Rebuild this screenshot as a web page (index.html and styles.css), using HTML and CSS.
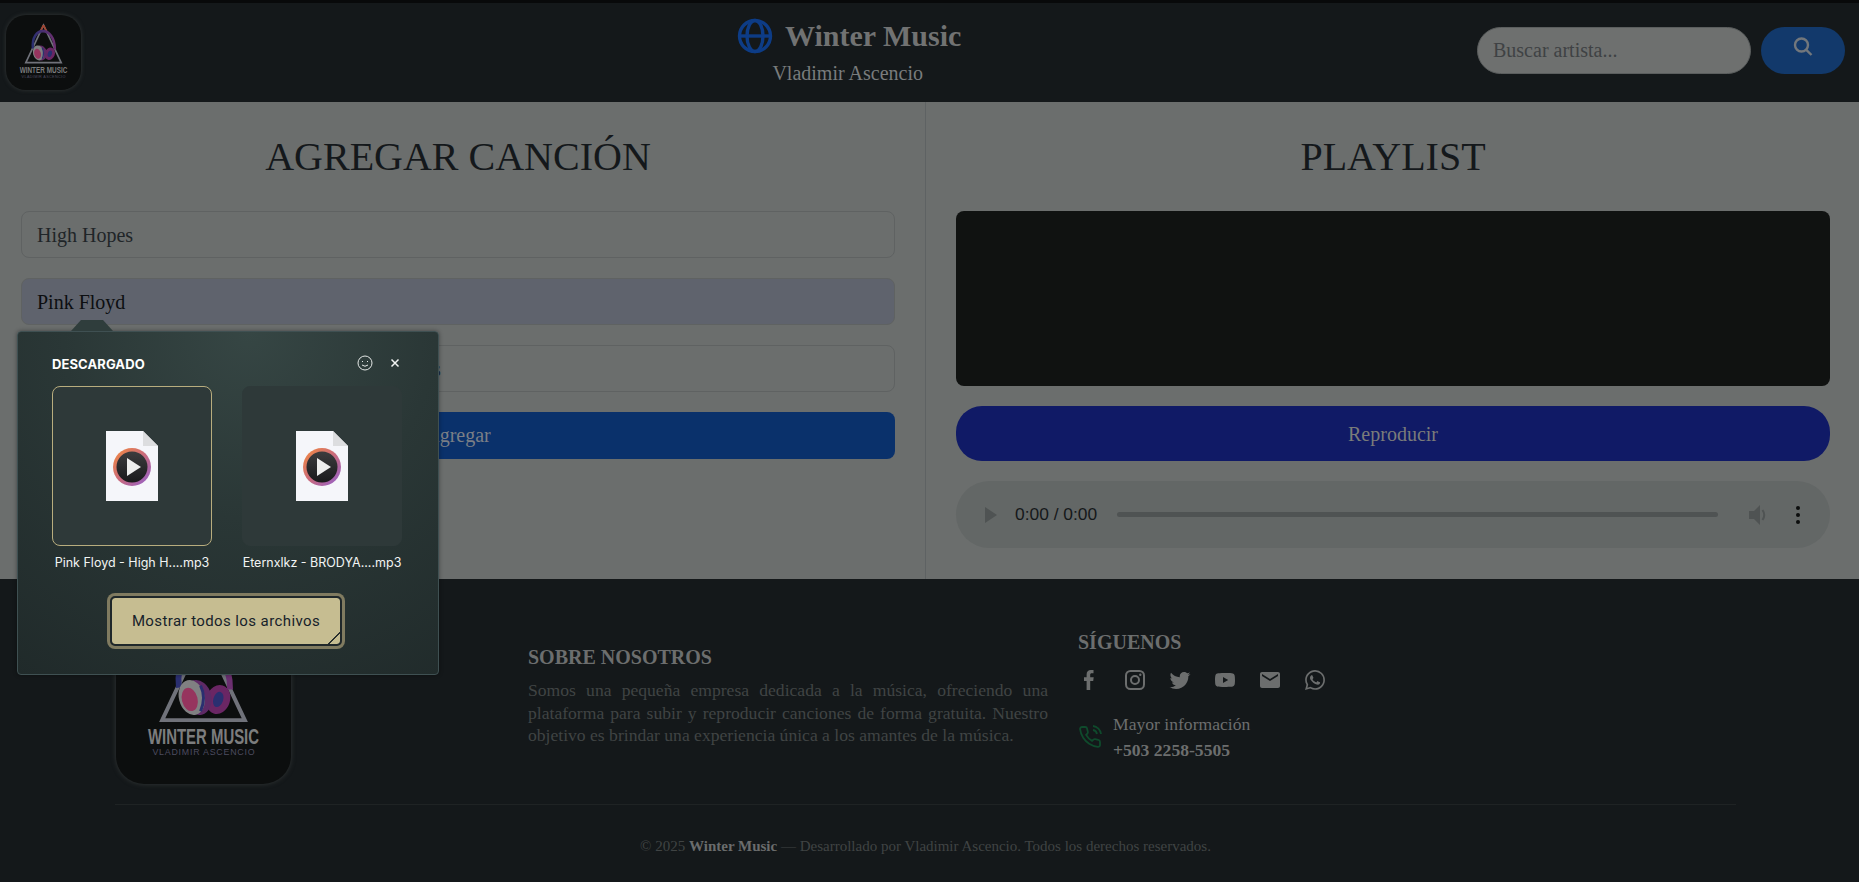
FILE: index.html
```html
<!DOCTYPE html>
<html lang="es">
<head>
  <meta charset="UTF-8">
  <title>Winter Music</title>
  <link rel="stylesheet" href="styles.css">
</head>
<body>

<svg class="defs" width="0" height="0">
  <defs>
    <linearGradient id="bandGrad" x1="0" y1="0" x2="1" y2="0">
      <stop offset="0" stop-color="#2a2f70"/>
      <stop offset="1" stop-color="#6c2f70"/>
    </linearGradient>
    <linearGradient id="ringGrad" x1="0" y1="0" x2="1" y2="1">
      <stop offset="0" stop-color="#f58a3c"/>
      <stop offset="0.5" stop-color="#c96a7c"/>
      <stop offset="1" stop-color="#8f5fd0"/>
    </linearGradient>
    <linearGradient id="discGrad" x1="0" y1="0" x2="0" y2="1">
      <stop offset="0" stop-color="#3c3c3e"/>
      <stop offset="1" stop-color="#1a1a1c"/>
    </linearGradient>
    <symbol id="logoMark" viewBox="0 0 178 178">
      <path d="M89 24 L131 113 H47 Z" fill="none" stroke="#70727a" stroke-width="4"/>
      <path d="M89 24 L81 40 M89 24 L97 40" stroke="#a34632" stroke-width="4" fill="none"/>
      <path d="M64 80 C58 24 116 24 116 82" fill="none" stroke="url(#bandGrad)" stroke-width="6"/>
      <ellipse cx="104" cy="92" rx="12" ry="15" fill="#6a2664" transform="rotate(18 104 92)"/>
      <ellipse cx="104" cy="92" rx="5" ry="8" fill="#2a2f70" transform="rotate(18 104 92)"/>
      <ellipse cx="83" cy="90" rx="14" ry="18" fill="#5e2a66" transform="rotate(-14 83 90)"/>
      <ellipse cx="77" cy="90" rx="13" ry="18" fill="#808082" transform="rotate(-14 77 90)"/>
      <ellipse cx="75" cy="92" rx="8" ry="12" fill="#96345e" transform="rotate(-14 75 92)"/>
      <path d="M86 78 Q92 90 86 104" fill="none" stroke="#2a2f70" stroke-width="3"/>
      <text class="logo-name" x="89" y="137" text-anchor="middle" textLength="113" lengthAdjust="spacingAndGlyphs">WINTER MUSIC</text>
      <text class="logo-sub" x="89" y="149" text-anchor="middle" textLength="104">VLADIMIR ASCENCIO</text>
    </symbol>
    <symbol id="fileIcon" viewBox="0 0 52 70">
      <path d="M0 0 H37 L52 15 V70 H0 Z" fill="#f5f6fa"/>
      <path d="M37 0 L52 15 H37 Z" fill="#dcdddf"/>
      <circle cx="26" cy="36" r="19" fill="url(#ringGrad)"/>
      <circle cx="26" cy="36" r="15.500" fill="url(#discGrad)"/>
      <path d="M21 27 L35 36 L21 45 Z" fill="#eeeeee"/>
    </symbol>
  </defs>
</svg>

<header class="top-bar">
  <div class="logo logo-small">
    <svg width="75" height="75"><use href="#logoMark"/></svg>
  </div>
  <div class="brand">
    <h1 class="brand-title">
      <svg width="36" height="36" viewBox="0 0 36 36" fill="none" stroke="#0d3c86" stroke-width="3.400">
        <circle cx="18" cy="18" r="15.500"/>
        <ellipse cx="18" cy="18" rx="8" ry="15.500"/>
        <path d="M3 18 H33"/>
      </svg>
      Winter Music
    </h1>
    <p class="brand-sub">Vladimir Ascencio</p>
  </div>
  <form class="search">
    <input class="search-input" type="text" placeholder="Buscar artista...">
    <button class="search-btn" type="button">
      <svg width="20" height="20" viewBox="0 0 20 20" fill="none" stroke="#72777c" stroke-width="2.400">
        <circle cx="8.500" cy="8" r="6.500"/>
        <path d="M13.300 12.800 L18.500 18"/>
      </svg>
    </button>
  </form>
</header>

<main class="columns">
  <section class="col col-left">
    <h2>AGREGAR CANCIÓN</h2>
    <input class="field" type="text" value="High Hopes">
    <input class="field field-filled" type="text" value="Pink Floyd">
    <div class="field field-file">s</div>
    <button class="add-btn" type="button">Agregar</button>
  </section>

  <section class="col col-right">
    <h2>PLAYLIST</h2>
    <div class="video"></div>
    <button class="play-btn" type="button">Reproducir</button>
    <div class="audio">
      <span class="audio-play"></span>
      <span class="audio-time">0:00 / 0:00</span>
      <span class="audio-track"></span>
      <svg width="20" height="24" viewBox="0 0 20 24" fill="#4f5353">
        <path d="M1 8 H6 L12 2 V22 L6 16 H1 Z"/>
        <path d="M14.500 7 Q18 12 14.500 17" fill="none" stroke="#4f5353" stroke-width="2"/>
      </svg>
      <span class="audio-more"><i></i><i></i><i></i></span>
    </div>
  </section>
</main>

<footer class="footer">
  <div class="footer-top">
    <div class="logo logo-big">
      <svg width="175" height="175"><use href="#logoMark"/></svg>
    </div>
    <div class="about">
      <h3>SOBRE NOSOTROS</h3>
      <p>Somos una pequeña empresa dedicada a la música, ofreciendo una plataforma para subir y reproducir canciones de forma gratuita. Nuestro objetivo es brindar una experiencia única a los amantes de la música.</p>
    </div>
    <div class="social">
      <h3>SÍGUENOS</h3>
      <div class="social-icons">
        <svg viewBox="0 0 24 24"><path d="M15.500 2h-2.700C10.200 2 8.600 3.700 8.600 6.400v2.900H6v3.600h2.600V22h3.600v-9.100h3l.5-3.600h-3.500V6.800c0-1 .4-1.600 1.600-1.600h1.700V2z"/></svg>
        <svg viewBox="0 0 24 24"><path fill-rule="evenodd" d="M7.500 2h9A5.500 5.500 0 0 1 22 7.500v9a5.500 5.500 0 0 1-5.500 5.500h-9A5.500 5.500 0 0 1 2 16.500v-9A5.500 5.500 0 0 1 7.500 2zm0 2A3.500 3.500 0 0 0 4 7.500v9A3.500 3.500 0 0 0 7.500 20h9a3.500 3.500 0 0 0 3.500-3.500v-9A3.500 3.500 0 0 0 16.500 4h-9zM12 7a5 5 0 1 1 0 10 5 5 0 0 1 0-10zm0 2a3 3 0 1 0 0 6 3 3 0 0 0 0-6zm5.300-3.500a1.200 1.200 0 1 1 0 2.400 1.200 1.200 0 0 1 0-2.400z"/></svg>
        <svg viewBox="0 0 24 24"><path d="M22.460 6c-.77.35-1.600.58-2.460.69.880-.53 1.560-1.370 1.880-2.380-.83.5-1.750.85-2.720 1.050C18.370 4.500 17.260 4 16 4c-2.350 0-4.270 1.920-4.270 4.290 0 .34.04.67.11.98C8.280 9.090 5.110 7.380 3 4.790c-.37.63-.58 1.370-.58 2.150 0 1.490.75 2.810 1.910 3.560-.71 0-1.370-.2-1.950-.5v.03c0 2.080 1.480 3.820 3.440 4.210a4.220 4.220 0 0 1-1.930.07 4.280 4.280 0 0 0 4 2.980 8.521 8.521 0 0 1-5.330 1.840c-.34 0-.68-.02-1.020-.06C3.440 20.290 5.700 21 8.120 21 16 21 20.330 14.460 20.330 8.790c0-.19 0-.37-.01-.56.84-.6 1.560-1.360 2.140-2.230z"/></svg>
        <svg viewBox="0 0 24 24"><path d="M10 15l5.190-3L10 9v6m11.560-7.830c.13.47.22 1.100.28 1.900.07.8.1 1.490.1 2.090L22 12c0 2.190-.16 3.800-.44 4.830-.25.9-.83 1.480-1.730 1.730-.47.13-1.330.22-2.650.28-1.300.07-2.490.1-3.590.1L12 19c-4.190 0-6.800-.16-7.830-.44-.9-.25-1.480-.83-1.730-1.730-.13-.47-.22-1.100-.28-1.900-.07-.8-.1-1.490-.1-2.090L2 12c0-2.190.16-3.800.44-4.830.25-.9.83-1.480 1.730-1.730.47-.13 1.330-.22 2.650-.28 1.300-.07 2.490-.1 3.590-.1L12 5c4.190 0 6.800.16 7.830.44.9.25 1.480.83 1.730 1.730z"/></svg>
        <svg viewBox="0 0 24 24"><path d="M20 4H4c-1.100 0-1.990.9-1.990 2L2 18c0 1.100.9 2 2 2h16c1.100 0 2-.9 2-2V6c0-1.100-.9-2-2-2zm0 4l-8 5-8-5V6l8 5 8-5v2z"/></svg>
        <svg viewBox="0 0 24 24"><path d="M12.040 2c-5.460 0-9.910 4.450-9.910 9.910 0 1.750.46 3.450 1.320 4.950L2.050 22l5.250-1.380c1.450.79 3.080 1.210 4.740 1.210 5.460 0 9.910-4.450 9.910-9.910 0-2.650-1.030-5.140-2.900-7.010A9.816 9.816 0 0 0 12.040 2m.01 1.670c2.200 0 4.260.86 5.820 2.420a8.225 8.225 0 0 1 2.410 5.830c0 4.540-3.700 8.230-8.240 8.230-1.480 0-2.930-.39-4.190-1.150l-.3-.17-3.120.82.83-3.040-.2-.32a8.188 8.188 0 0 1-1.260-4.380c.01-4.540 3.700-8.240 8.250-8.240M8.530 7.330c-.16 0-.43.06-.66.31-.22.25-.87.86-.87 2.070 0 1.220.89 2.390 1 2.560.14.17 1.760 2.670 4.250 3.730.59.27 1.050.42 1.410.53.59.19 1.130.16 1.560.1.48-.07 1.460-.6 1.670-1.180.21-.58.21-1.070.15-1.180-.07-.1-.23-.16-.48-.27-.25-.14-1.470-.74-1.690-.82-.23-.08-.37-.12-.56.12-.16.25-.64.81-.78.97-.15.17-.29.19-.53.07-.26-.13-1.060-.39-2-1.230-.74-.66-1.230-1.470-1.380-1.720-.12-.24-.01-.39.11-.5.11-.11.27-.29.37-.44.13-.14.17-.25.25-.41.08-.17.04-.31-.02-.43-.06-.11-.56-1.350-.77-1.840-.2-.48-.4-.42-.56-.43-.14 0-.3-.01-.47-.01z"/></svg>
      </div>
      <div class="contact">
        <svg width="24" height="24" viewBox="0 0 24 24" fill="none" stroke="#0f4a2c" stroke-width="1.800">
          <path d="M22 16.900v3a2 2 0 0 1-2.200 2 19.800 19.800 0 0 1-8.600-3.100 19.500 19.500 0 0 1-6-6A19.800 19.800 0 0 1 2.100 4.200 2 2 0 0 1 4.100 2h3a2 2 0 0 1 2 1.700c.1 1 .4 1.900.7 2.800a2 2 0 0 1-.5 2.100L8.100 9.900a16 16 0 0 0 6 6l1.300-1.300a2 2 0 0 1 2.100-.4c.9.3 1.800.6 2.800.7a2 2 0 0 1 1.700 2z"/>
          <path d="M15 5a5 5 0 0 1 4 4M15 1a9 9 0 0 1 8 8"/>
        </svg>
        <p>Mayor información<br><strong>+503 2258-5505</strong></p>
      </div>
    </div>
  </div>
  <p class="copyright">© 2025 <strong>Winter Music</strong> — Desarrollado por Vladimir Ascencio. Todos los derechos reservados.</p>
</footer>

<aside class="downloads">
  <div class="downloads-head">
    <span class="downloads-title">DESCARGADO</span>
    <svg class="smile-icon" width="16" height="16" viewBox="0 0 16 16" fill="none" stroke="#e4e8e6" stroke-width="1">
      <circle cx="8" cy="8" r="7"/>
      <path d="M5 10 Q8 12.500 11 10"/>
      <path d="M5.500 6 V7 M10.500 6 V7"/>
    </svg>
    <svg class="close-icon" width="10" height="10" viewBox="0 0 10 10" stroke="#f2f4f3" stroke-width="1.500">
      <path d="M1.500 1.500 L8.500 8.500 M8.500 1.500 L1.500 8.500"/>
    </svg>
  </div>
  <div class="tiles">
    <div class="tile tile-active">
      <div class="tile-box">
        <svg width="52" height="70" viewBox="0 0 52 70"><use href="#fileIcon"/></svg>
      </div>
      <span class="tile-name">Pink Floyd - High H....mp3</span>
    </div>
    <div class="tile">
      <div class="tile-box">
        <svg width="52" height="70" viewBox="0 0 52 70"><use href="#fileIcon"/></svg>
      </div>
      <span class="tile-name">Eternxlkz - BRODYA....mp3</span>
    </div>
  </div>
  <div class="show-all-row">
    <button class="show-all" type="button">Mostrar todos los archivos</button>
  </div>
</aside>

</body>
</html>
```

FILE: styles.css
```css
* {
  box-sizing: border-box;
}

body {
  margin: 0;
  position: relative;
  font-family: "Liberation Serif", serif;
  background: #6b6e6d;
  color: #14181b;
}

.defs {
  position: absolute;
}

/* header */
.top-bar {
  display: flex;
  align-items: center;
  height: 102px;
  padding: 0 14px 0 6px;
  background: #14181a;
  border-top: 3px solid #08090a;
}

.logo {
  background: #0c0e0e;
  flex: none;
}

.logo svg {
  display: block;
}

.logo-small {
  width: 75px;
  height: 75px;
  border-radius: 20px;
  box-shadow: 0 0 4px #333737;
}

.logo-name {
  font-family: "Liberation Sans", sans-serif;
  font-weight: bold;
  font-size: 23px;
  fill: #7c7d7e;
}

.logo-sub {
  font-family: "Liberation Sans", sans-serif;
  font-size: 9px;
  fill: #4d4c60;
}

.brand {
  margin-left: 656px;
  padding-bottom: 2px;
  text-align: center;
}

.brand-title {
  display: flex;
  align-items: center;
  gap: 12px;
  margin: 0;
  font-size: 30px;
  color: #717272;
}

.brand-sub {
  margin: 8px 0 0;
  padding-right: 3px;
  font-size: 20px;
  color: #797c7d;
}

.search {
  display: flex;
  gap: 10px;
  margin: 0 0 4px auto;
}

.search-input {
  width: 274px;
  height: 47px;
  padding: 0 15px;
  font: 20px "Liberation Serif", serif;
  color: #3f4244;
  background: #6e706f;
  border: 1px solid #5b5e5e;
  border-radius: 24px;
  outline: none;
}

.search-input::placeholder {
  color: #3f4244;
  opacity: 1;
}

.search-btn {
  display: flex;
  justify-content: center;
  padding: 10px 0 0;
  width: 84px;
  height: 47px;
  background: #12396b;
  border: none;
  border-radius: 24px;
}

/* main columns */
.columns {
  display: grid;
  grid-template-columns: 926px 1fr;
  height: 477px;
}

.col {
  display: flex;
  flex-direction: column;
  gap: 20px;
}

.col-left {
  padding: 32px 30px 0 21px;
  border-right: 1px solid #5e6263;
}

.col-right {
  padding: 32px 29px 0 30px;
}

h2 {
  margin: 0 0 11px;
  font-size: 40px;
  font-weight: normal;
  line-height: 46px;
  text-align: center;
}

.field {
  width: 100%;
  height: 47px;
  padding: 2px 15px 0;
  font: 20px "Liberation Serif", serif;
  line-height: 43px;
  color: #1f2528;
  background: transparent;
  border: 1px solid #5f6262;
  border-radius: 8px;
  outline: none;
}

.field-filled {
  color: #0c0e10;
  background: #5f636d;
}

.field-file {
  padding-left: 411px;
  color: #1c2a40;
}

.add-btn {
  height: 47px;
  font: 20px "Liberation Serif", serif;
  color: #7a7f86;
  background: #0a316b;
  border: none;
  border-radius: 8px;
}

.video {
  height: 175px;
  background: #101211;
  border-radius: 8px;
}

.play-btn {
  height: 55px;
  padding-top: 2px;
  font: 20px "Liberation Serif", serif;
  color: #7a7c7a;
  background: #101a66;
  border: none;
  border-radius: 26px;
}

.audio {
  display: flex;
  align-items: center;
  height: 67px;
  padding: 0 30px 0 29px;
  background: #636766;
  border-radius: 34px;
}

.audio-play {
  width: 0;
  height: 0;
  border-left: 12px solid #4f5353;
  border-top: 8px solid transparent;
  border-bottom: 8px solid transparent;
}

.audio-time {
  margin: 0 20px 0 18px;
  font: 17.400px "Liberation Sans", sans-serif;
  color: #15181a;
}

.audio-track {
  flex: 1;
  height: 5px;
  margin-right: 30px;
  background: #4f5353;
  border-radius: 3px;
}

.audio-more {
  display: flex;
  flex-direction: column;
  gap: 3px;
  margin-left: 28px;
}

.audio-more i {
  width: 4px;
  height: 4px;
  background: #0c0e0e;
  border-radius: 50%;
}

/* footer */
.footer {
  height: 303px;
  padding: 30px 123px 0 115px;
  background: #14181a;
}

.footer-top {
  display: flex;
  align-items: center;
  padding-bottom: 20px;
  border-bottom: 1px solid #1f2324;
}

.logo-big {
  width: 175px;
  height: 175px;
  margin: 0 237px 0 1px;
  border-radius: 28px;
  box-shadow: 0 0 5px #333737;
}

.about {
  width: 520px;
  margin-right: 30px;
}

h3 {
  margin: 0;
  font-size: 20px;
  color: #6c6e6e;
}

.about p {
  margin: 10px 0 0;
  font-size: 17.600px;
  line-height: 22.400px;
  text-align: justify;
  color: #404444;
}

.social-icons {
  display: flex;
  gap: 21px;
  margin-top: 14px;
}

.social-icons svg {
  width: 24px;
  height: 24px;
  fill: #6c6e6e;
}

.contact {
  display: flex;
  align-items: center;
  gap: 11px;
  margin-top: 19px;
}

.contact p {
  margin: 0;
  font-size: 17.600px;
  line-height: 26px;
  color: #6c6e6e;
}

.copyright {
  margin: 33px 0 0;
  font-size: 15px;
  text-align: center;
  color: #404444;
}

.copyright strong {
  color: #6a6c6c;
}

/* download popup */
.downloads {
  position: absolute;
  left: 17px;
  top: 331px;
  width: 422px;
  height: 344px;
  padding: 22px 34px 0;
  font-family: Inter, "Liberation Sans", sans-serif;
  background: radial-gradient(circle at 55% 0, #364644 0, #2a3736 45%, #202a2a 100%);
  border: 1px solid #3f5052;
  border-radius: 4px;
  box-shadow: 0 0 4px rgba(0, 0, 0, 0.4);
}

.downloads::before {
  content: "";
  position: absolute;
  left: 53px;
  top: -12px;
  width: 42px;
  height: 11px;
  background: #2f3d3c;
  clip-path: polygon(0 100%, 10px 0, 32px 0, 42px 100%);
}

.downloads-head {
  display: flex;
  align-items: center;
  height: 20px;
}

.downloads-title {
  flex: 1;
  font-size: 13px;
  font-weight: 700;
  letter-spacing: 0.1px;
  color: #fff;
}

.smile-icon {
  margin-bottom: 2px;
}

.close-icon {
  margin: 0 4px 2px 17px;
}

.tiles {
  display: flex;
  gap: 30px;
  margin-top: 12px;
}

.tile {
  width: 160px;
  text-align: center;
}

.tile-box {
  display: flex;
  align-items: center;
  justify-content: center;
  height: 160px;
  background: #2e3939;
  border: 1px solid #2e3939;
  border-radius: 8px;
}

.tile-active .tile-box {
  border-color: #b8ad7e;
}

.tile-name {
  display: block;
  margin-top: 9px;
  font-size: 12.500px;
  white-space: nowrap;
  color: #f2f4f3;
}

.show-all-row {
  display: flex;
  justify-content: center;
  margin: 26px 0 0 -4px;
}

.show-all {
  position: relative;
  width: 232px;
  height: 50px;
  font: 15px Roboto, sans-serif;
  letter-spacing: 0.4px;
  color: #16222a;
  background: #c6bd91;
  border: 2px solid #20282a;
  border-radius: 5px;
  box-shadow: 0 0 0 3px #807b60;
  background-clip: padding-box;
}

.show-all::after {
  content: "";
  position: absolute;
  right: 0;
  bottom: 0;
  width: 12px;
  height: 12px;
  background: linear-gradient(135deg, transparent 46%, #2a302e 46%, #2a302e 58%, transparent 58%);
}
```
